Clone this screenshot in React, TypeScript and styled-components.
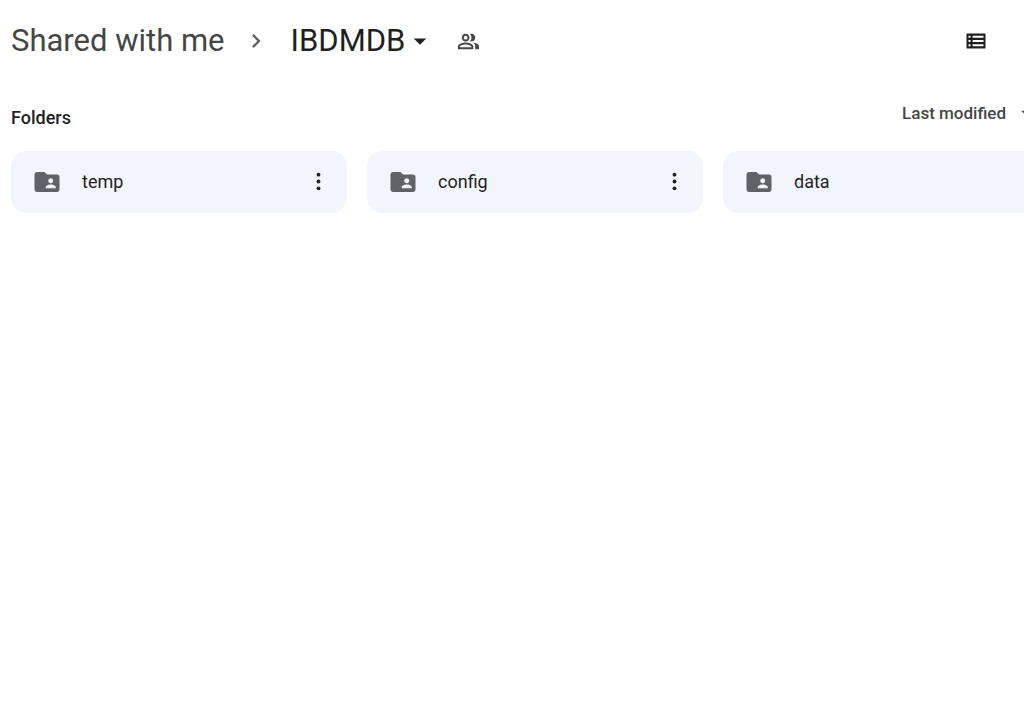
import React from "react";
import styled, { createGlobalStyle } from "styled-components";
import {
  MdArrowDropDown,
  MdChevronRight,
  MdFolderShared,
  MdOutlinePeopleAlt,
} from "react-icons/md";

const GlobalStyle = createGlobalStyle`
  *, *::before, *::after { box-sizing: border-box; }
  body {
    margin: 0;
    background: #fff;
    color: #1f1f1f;
    font-family: "Google Sans", Roboto, "Liberation Sans", sans-serif;
    overflow-x: hidden;
  }
`;

const Page = styled.main`
  padding: 0 11px;
`;

const Header = styled.header`
  display: flex;
  align-items: center;
  justify-content: space-between;
  height: 82px;
  padding-right: 27px;
`;

const Breadcrumb = styled.nav`
  display: flex;
  align-items: center;
`;

const CrumbLink = styled.a`
  color: #444746;
  font-size: 31px;
  line-height: 40px;
  text-decoration: none;
  white-space: nowrap;
`;

const Separator = styled.span`
  display: flex;
  margin: 0 21px 0 17px;
  color: #5f6368;
`;

const IconButton = styled.button`
  display: flex;
  align-items: center;
  justify-content: center;
  padding: 0;
  border: 0;
  background: none;
  color: #1f1f1f;
  cursor: pointer;
`;

const CrumbButton = styled(IconButton)`
  font-family: inherit;
  font-size: 31px;
  line-height: 40px;
`;

const ShareButton = styled(IconButton)`
  margin-left: 22px;
  color: #444746;
`;

const SectionBar = styled.div`
  display: flex;
  align-items: flex-start;
  justify-content: space-between;
  height: 69px;
  padding-top: 17px;
`;

const SectionTitle = styled.h2`
  margin: 0;
  padding-top: 6px;
  font-size: 18px;
  font-weight: 500;
  line-height: 26px;
`;

const SortButton = styled(IconButton)`
  gap: 7px;
  margin-right: -28px;
  color: #444746;
  font-family: inherit;
  font-size: 17px;
  font-weight: 500;
  line-height: 26px;
`;

const FolderGrid = styled.ul`
  display: grid;
  grid-template-columns: repeat(3, minmax(336px, 1fr));
  gap: 20px;
  margin: 0;
  padding: 0;
  list-style: none;
`;

const FolderCard = styled.li`
  display: flex;
  align-items: center;
  height: 62px;
  padding: 0 19px 0 21px;
  border-radius: 15px;
  background: #f2f5fc;
`;

const FolderIcon = styled(MdFolderShared)`
  flex: none;
  color: #5f6368;
`;

const FolderName = styled.a`
  flex: 1;
  margin-left: 20px;
  color: #1f1f1f;
  font-size: 18px;
  line-height: 26px;
  text-decoration: none;
`;

const folders = ["temp", "config", "data"];

function ListIcon() {
  return (
    <svg width="20" height="16" viewBox="0 0 20 16" aria-hidden="true">
      <path
        fill="currentColor"
        fillRule="evenodd"
        d="M0.5 0.6h19v14.8h-19zM2.5 2.8v2h2v-2zM6.6 2.8v2h10.9v-2zM2.5 7v2h2v-2zM6.6 7v2h10.9v-2zM2.5 11.2v2h2v-2zM6.6 11.2v2h10.9v-2z"
      />
    </svg>
  );
}

function MoreIcon() {
  return (
    <svg width="19" height="24" viewBox="0 0 19 24" fill="currentColor" aria-hidden="true">
      <circle cx="9.5" cy="4.7" r="1.9" />
      <circle cx="9.5" cy="11.5" r="1.9" />
      <circle cx="9.5" cy="18.3" r="1.9" />
    </svg>
  );
}

export default function App() {
  return (
    <>
      <GlobalStyle />
      <Page>
        <Header>
          <Breadcrumb aria-label="Breadcrumb">
            <CrumbLink href="#shared">Shared with me</CrumbLink>
            <Separator>
              <MdChevronRight size={28} />
            </Separator>
            <CrumbButton type="button">
              IBDMDB
              <MdArrowDropDown size={30} />
            </CrumbButton>
            <ShareButton type="button" aria-label="Manage access">
              <MdOutlinePeopleAlt size={23} />
            </ShareButton>
          </Breadcrumb>
          <IconButton type="button" aria-label="List layout">
            <ListIcon />
          </IconButton>
        </Header>
        <SectionBar>
          <SectionTitle>Folders</SectionTitle>
          <SortButton type="button">
            Last modified
            <MdArrowDropDown size={28} />
          </SortButton>
        </SectionBar>
        <FolderGrid>
          {folders.map((name) => (
            <FolderCard key={name}>
              <FolderIcon size={30} />
              <FolderName href={`#${name}`}>{name}</FolderName>
              <IconButton type="button" aria-label={`More actions for ${name}`}>
                <MoreIcon />
              </IconButton>
            </FolderCard>
          ))}
        </FolderGrid>
      </Page>
    </>
  );
}
